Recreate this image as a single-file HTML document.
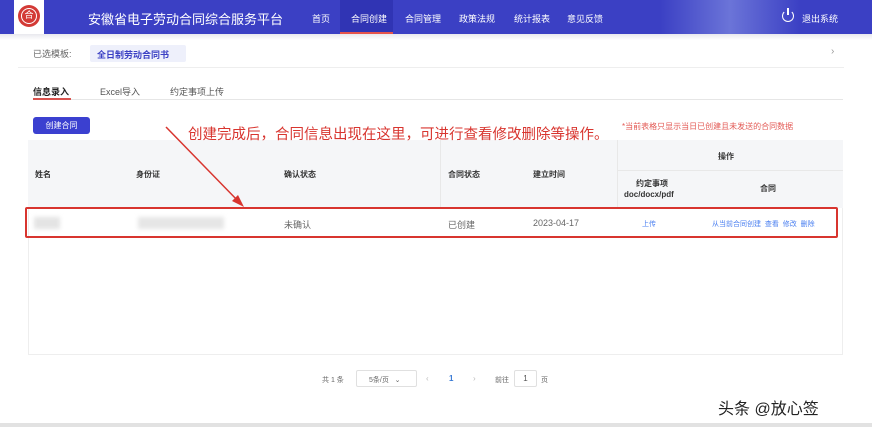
<!DOCTYPE html><html><head><meta charset="utf-8"><style>
*{margin:0;padding:0;box-sizing:border-box}
body{width:872px;height:427px;overflow:hidden;background:#fff;font-family:"Liberation Sans","Noto Sans CJK SC",sans-serif;position:relative;color:#333}
.a{position:absolute;white-space:nowrap}
.hd{position:absolute;left:0;top:0;width:872px;height:34px;background:#3b40c4}
.nav{font-size:9px;color:#fff;top:12px}
.th{font-size:8px;color:#333;font-weight:bold}
.td{font-size:9px;color:#666}
.lk{font-size:7px;color:#4a7ff0}
</style></head><body>
<div class="hd"></div>
<div class="a" style="left:660px;top:0;width:140px;height:34px;background:linear-gradient(90deg,#3b40c4,#6b74d8,#3b40c4)"></div>
<div class="a" style="left:14px;top:0;width:30px;height:34px;background:#fff"></div>
<div class="a" style="left:18px;top:5px;width:22px;height:22px;border-radius:50%;background:#d33a36"></div>
<div class="a" style="left:21px;top:8px;width:16px;height:16px;border-radius:50%;border:1.5px solid #fff;color:#fff;font-size:9px;text-align:center;line-height:13px">合</div>
<div class="a" style="left:88px;top:9px;font-size:13px;color:#fff">安徽省电子劳动合同综合服务平台</div>
<div class="a" style="left:340px;top:0;width:53px;height:34px;background:#3034b4;border-bottom:2px solid #e5534b"></div>
<div class="a nav" style="left:312px">首页</div>
<div class="a nav" style="left:351px">合同创建</div>
<div class="a nav" style="left:405px">合同管理</div>
<div class="a nav" style="left:459px">政策法规</div>
<div class="a nav" style="left:514px">统计报表</div>
<div class="a nav" style="left:567px">意见反馈</div>
<div class="a" style="left:782px;top:10px;width:12px;height:12px;border:1.5px solid #fff;border-top-color:transparent;border-radius:50%"></div>
<div class="a" style="left:787px;top:8px;width:1.5px;height:7px;background:#fff"></div>
<div class="a nav" style="left:802px">退出系统</div>
<div class="a" style="left:0;top:34px;width:872px;height:6px;background:linear-gradient(#e8e8ee,#fff)"></div>
<div class="a" style="left:33px;top:47px;font-size:9px;color:#666">已选模板:</div>
<div class="a" style="left:90px;top:45px;width:96px;height:17px;background:#eef0fb;border-radius:2px"></div>
<div class="a" style="left:97px;top:48px;font-size:9px;color:#3b40c4;font-weight:bold">全日制劳动合同书</div>
<div class="a" style="left:831px;top:46px;font-size:10px;color:#999">›</div>
<div class="a" style="left:18px;top:67px;width:826px;height:1px;background:#eee"></div>
<div class="a" style="left:33px;top:85px;font-size:9px;color:#222;font-weight:bold">信息录入</div>
<div class="a" style="left:100px;top:85px;font-size:9px;color:#555">Excel导入</div>
<div class="a" style="left:170px;top:85px;font-size:9px;color:#555">约定事项上传</div>
<div class="a" style="left:33px;top:99px;width:810px;height:1px;background:#e6e6e6"></div>
<div class="a" style="left:33px;top:98px;width:38px;height:2px;background:#d9534f"></div>
<div class="a" style="left:33px;top:117px;width:57px;height:17px;background:#3b40d0;border-radius:3px;color:#fff;font-size:8px;text-align:center;line-height:17px">创建合同</div>
<div class="a" style="left:622px;top:121px;font-size:8px;color:#e35a55">*当前表格只显示当日已创建且未发送的合同数据</div>
<div class="a" style="left:28px;top:140px;width:815px;height:215px;border:1px solid #eee"></div>
<div class="a" style="left:28px;top:140px;width:815px;height:68px;background:#f5f6f8"></div>
<div class="a" style="left:617px;top:140px;width:1px;height:68px;background:#e8e8e8"></div>
<div class="a" style="left:440px;top:140px;width:1px;height:68px;background:#e8e8e8"></div>
<div class="a" style="left:617px;top:170px;width:226px;height:1px;background:#e8e8e8"></div>
<div class="a th" style="left:35px;top:169px">姓名</div>
<div class="a th" style="left:136px;top:169px">身份证</div>
<div class="a th" style="left:284px;top:169px">确认状态</div>
<div class="a th" style="left:448px;top:169px">合同状态</div>
<div class="a th" style="left:533px;top:169px">建立时间</div>
<div class="a th" style="left:718px;top:151px">操作</div>
<div class="a th" style="left:636px;top:178px">约定事项</div>
<div class="a th" style="left:624px;top:190px">doc/docx/pdf</div>
<div class="a th" style="left:760px;top:183px">合同</div>
<div class="a" style="left:25px;top:207px;width:813px;height:31px;border:2px solid #d8352f;border-radius:2px"></div>
<div class="a" style="left:34px;top:217px;width:26px;height:12px;background:#e4e4e4;filter:blur(2px)"></div>
<div class="a" style="left:138px;top:217px;width:86px;height:12px;background:#e6e6e6;filter:blur(2px)"></div>
<div class="a td" style="left:284px;top:218px">未确认</div>
<div class="a td" style="left:448px;top:218px">已创建</div>
<div class="a td" style="left:533px;top:218px">2023-04-17</div>
<div class="a lk" style="left:642px;top:219px">上传</div>
<div class="a lk" style="left:712px;top:219px">从当前合同创建 &nbsp;查看 &nbsp;修改 &nbsp;删除</div>
<div class="a" style="left:188px;top:123px;font-size:14.5px;color:#d8352f;z-index:5">创建完成后，合同信息出现在这里，可进行查看修改删除等操作。</div>
<svg class="a" style="left:160px;top:125px;z-index:5" width="90" height="85"><line x1="6" y1="2" x2="80" y2="78" stroke="#d8352f" stroke-width="1.5"/><polygon points="84,82 72,76 78,70" fill="#d8352f"/></svg>
<div class="a" style="left:322px;top:375px;font-size:7px;color:#666">共 1 条</div>
<div class="a" style="left:356px;top:370px;width:61px;height:17px;border:1px solid #e0e0e0;border-radius:2px;font-size:7px;color:#666;padding:4px 0 0 12px">5条/页 &nbsp; ⌄</div>
<div class="a" style="left:426px;top:374px;font-size:8px;color:#bbb">‹</div>
<div class="a" style="left:449px;top:374px;font-size:8px;color:#3a7bd5;font-weight:bold">1</div>
<div class="a" style="left:473px;top:374px;font-size:8px;color:#bbb">›</div>
<div class="a" style="left:495px;top:375px;font-size:7px;color:#666">前往</div>
<div class="a" style="left:514px;top:370px;width:23px;height:17px;border:1px solid #e0e0e0;border-radius:2px;font-size:8px;color:#555;text-align:center;line-height:15px">1</div>
<div class="a" style="left:541px;top:375px;font-size:7px;color:#666">页</div>
<div class="a" style="left:718px;top:395px;font-size:16px;color:#222">头条 @放心签</div>
<div class="a" style="left:0;top:423px;width:872px;height:4px;background:#e2e2e2"></div>
</body></html>
